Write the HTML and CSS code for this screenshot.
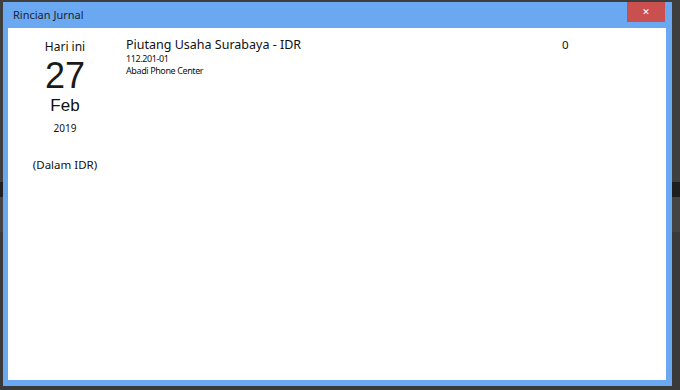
FILE: index.html
```html
<!DOCTYPE html>
<html lang="id">
<head>
<meta charset="utf-8">
<title>Rincian Jurnal</title>
<link rel="stylesheet" href="styles.css">
</head>
<body>
<div class="window">
  <div class="titlebar">
    <span class="title">Rincian Jurnal</span>
    <button class="close" type="button" aria-label="Tutup">&#x2715;</button>
  </div>
  <div class="content">
    <div class="datecol">
      <div class="today">Hari ini</div>
      <div class="day">27</div>
      <div class="month">Feb</div>
      <div class="year">2019</div>
      <div class="currency">(Dalam IDR)</div>
    </div>
    <div class="entry">
      <div class="info">
        <div class="account">Piutang Usaha Surabaya - IDR</div>
        <div class="code">112.201-01</div>
        <div class="party">Abadi Phone Center</div>
      </div>
      <div class="amount">0</div>
    </div>
  </div>
</div>
</body>
</html>
```

FILE: styles.css
```css
* { box-sizing: border-box; }
html, body { margin: 0; padding: 0; }
body {
  width: 680px;
  height: 390px;
  overflow: hidden;
  background:
    linear-gradient(to bottom,
      #3e3e3e 0, #3e3e3e 182px,
      #1e1e1e 182px, #1e1e1e 197px,
      #444 197px, #444 232px,
      #3a3a3a 232px, #3a3a3a 390px);
  font-family: "Noto Sans", "Open Sans", sans-serif;
  color: #111;
}
.window {
  margin: 2px 0 0 3px;
  width: 669px;
  height: 384px;
  background: #6aa8f2;
  display: flex;
  flex-direction: column;
}
.titlebar {
  height: 26px;
  display: flex;
  align-items: flex-start;
  justify-content: space-between;
}
.title {
  font-size: 11px;
  line-height: 12px;
  margin: 7px 0 0 10px;
  color: #1c2330;
}
.close {
  width: 38px;
  height: 20px;
  margin-right: 7px;
  border: 0;
  padding: 0;
  background: #c9504e;
  color: #fff;
  font-size: 9px;
  line-height: 20px;
  font-family: "DejaVu Sans", sans-serif;
}
.content {
  flex: 1;
  margin: 0 6px 6px 5px;
  background: #fff;
  display: flex;
}
.datecol {
  width: 114px;
  display: flex;
  flex-direction: column;
  align-items: center;
  padding-top: 11px;
}
.today { font-size: 12px; line-height: 16px; }
.day {
  font-family: "Liberation Sans", sans-serif;
  font-size: 36px;
  line-height: 41px;
  color: #1a1a1a;
}
.month {
  font-family: "Liberation Sans", sans-serif;
  font-size: 17px;
  line-height: 20px;
}
.year { font-size: 10px; line-height: 14px; margin-top: 5px; }
.currency { font-size: 11.5px; line-height: 16px; margin-top: 22px; }
.entry {
  flex: 1;
  display: flex;
  padding: 8px 0 0 4px;
}
.info { width: 436px; }
.account { font-size: 12.5px; line-height: 17px; }
.code, .party {
  font-size: 9px;
  line-height: 12px;
  letter-spacing: -0.4px;
}
.amount { font-size: 11.5px; line-height: 17px; }
```
